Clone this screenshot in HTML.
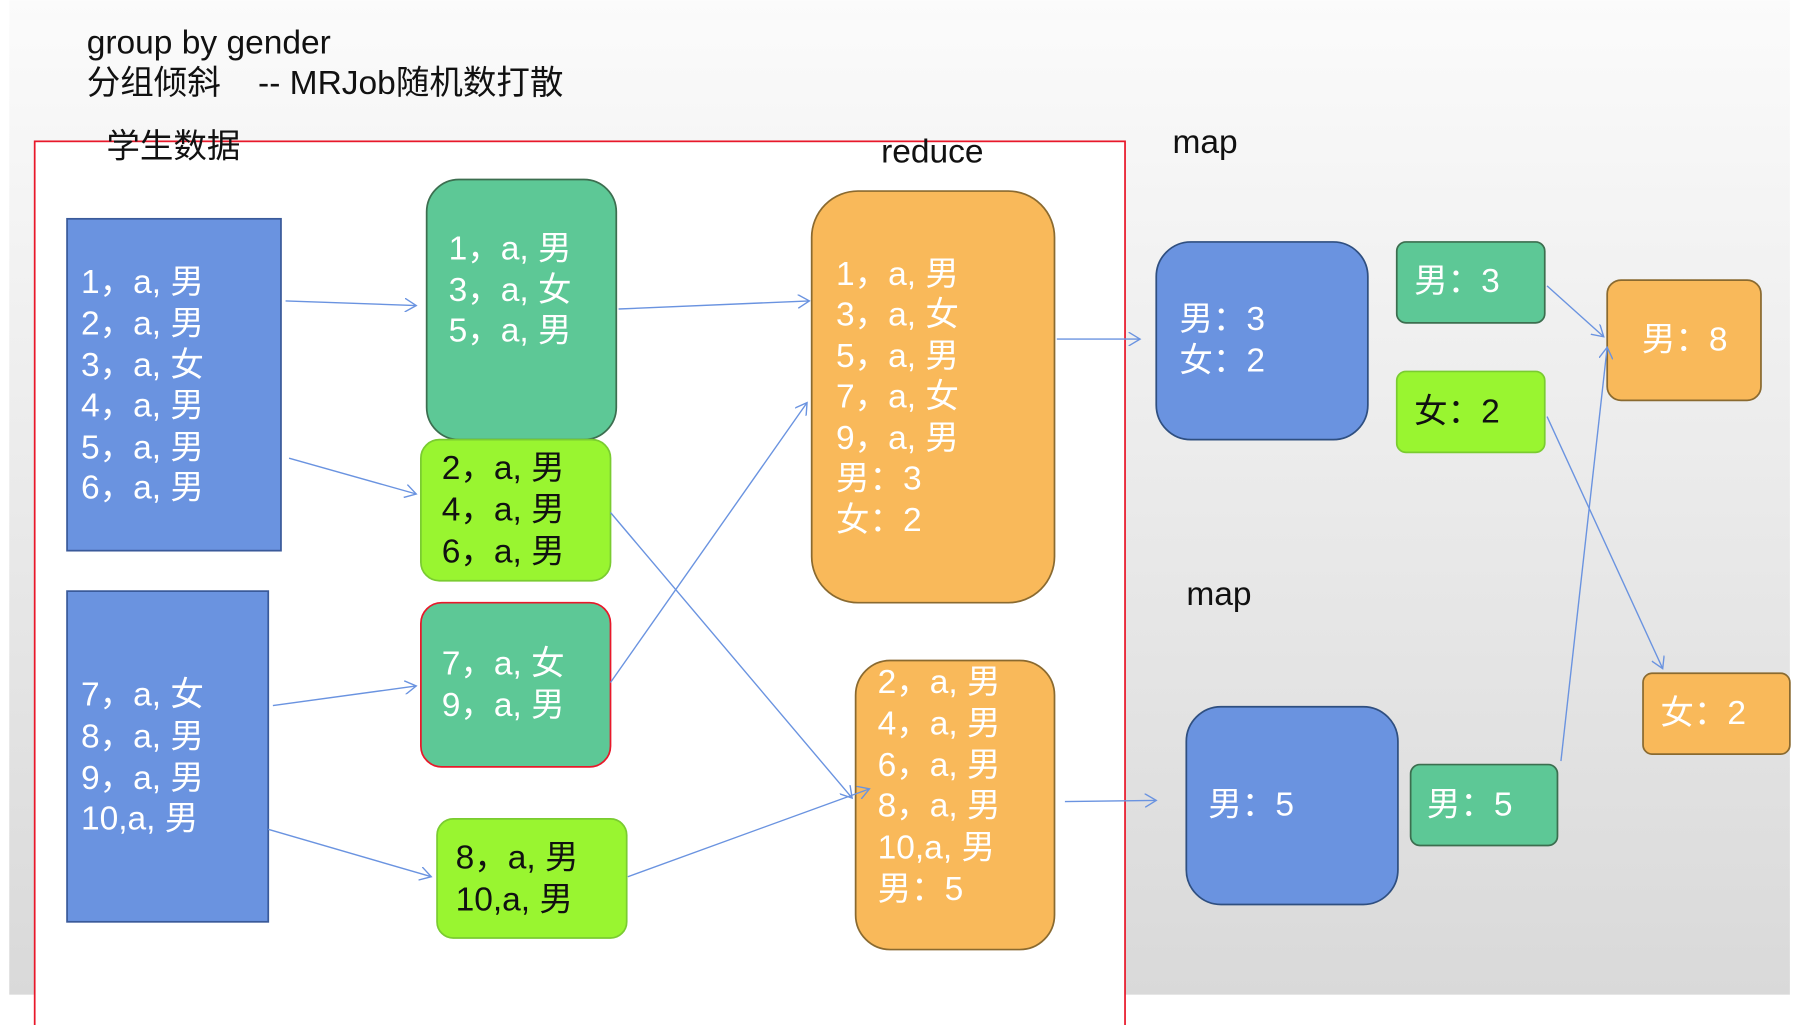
<!DOCTYPE html>
<html><head><meta charset="utf-8"><style>
html,body{margin:0;padding:0;background:#fff;overflow:hidden}
svg{display:block}
text{font-family:"Liberation Sans","Noto Sans CJK SC",sans-serif;font-size:29px;dominant-baseline:central}
.w{fill:#fff}.k{fill:#111}
</style></head><body>
<svg width="1813" height="1025" viewBox="0 0 1568 886" xmlns="http://www.w3.org/2000/svg">
<defs>
<linearGradient id="bg" x1="0" y1="0" x2="0" y2="1"><stop offset="0" stop-color="#fbfbfb"/><stop offset="1" stop-color="#d9d9d9"/></linearGradient>
<marker id="ar" markerWidth="12" markerHeight="12" refX="10" refY="6" orient="auto" markerUnits="userSpaceOnUse"><path d="M0,0 L10,6 L0,12" fill="none" stroke="#6a93e0" stroke-width="1.2"/></marker>
</defs>
<rect x="0" y="0" width="1568" height="886" fill="#fff"/>
<rect x="8" y="0" width="1540" height="860" fill="url(#bg)"/>
<rect x="30" y="122" width="943" height="780" fill="#fff" stroke="#e8182a" stroke-width="1.5"/>

<text x="75" y="37" class="k">group by gender</text>
<text x="75" y="72" class="k" xml:space="preserve">分组倾斜    -- MRJob随机数打散</text>
<text x="92" y="127" class="k">学生数据</text>
<text x="762" y="131" class="k">reduce</text>
<text x="1014" y="123" class="k">map</text>
<text x="1026" y="514" class="k">map</text>

<rect x="58" y="189" width="185" height="287" fill="#6a93e0" stroke="#3a5a9a" stroke-width="1.5"/>
<rect x="58" y="511" width="174" height="286" fill="#6a93e0" stroke="#3a5a9a" stroke-width="1.5"/>
<rect x="369" y="155" width="164" height="225" rx="28" fill="#5dc896" stroke="#3c6e4f" stroke-width="1.5"/>
<rect x="364" y="380" width="164" height="122" rx="16" fill="#99f530" stroke="#7acc30" stroke-width="1.5"/>
<rect x="364" y="521" width="164" height="142" rx="18" fill="#5dc896" stroke="#e8182a" stroke-width="1.5"/>
<rect x="378" y="708" width="164" height="103" rx="14" fill="#99f530" stroke="#7acc30" stroke-width="1.5"/>
<rect x="702" y="165" width="210" height="356" rx="40" fill="#f9b95a" stroke="#8a6a30" stroke-width="1.5"/>
<rect x="740" y="571" width="172" height="250" rx="30" fill="#f9b95a" stroke="#8a6a30" stroke-width="1.5"/>
<rect x="1000" y="209" width="183" height="171" rx="30" fill="#6a93e0" stroke="#2f4f80" stroke-width="1.5"/>
<rect x="1026" y="611" width="183" height="171" rx="30" fill="#6a93e0" stroke="#2f4f80" stroke-width="1.5"/>
<rect x="1208" y="209" width="128" height="70" rx="8" fill="#5dc896" stroke="#3c6e4f" stroke-width="1.5"/>
<rect x="1208" y="321" width="128" height="70" rx="8" fill="#99f530" stroke="#7acc30" stroke-width="1.5"/>
<rect x="1220" y="661" width="127" height="70" rx="8" fill="#5dc896" stroke="#3c6e4f" stroke-width="1.5"/>
<rect x="1390" y="242" width="133" height="104" rx="12" fill="#f9b95a" stroke="#8a6a30" stroke-width="1.5"/>
<rect x="1421" y="582" width="127" height="70" rx="8" fill="#f9b95a" stroke="#8a6a30" stroke-width="1.5"/>

<g class="w">
<text x="70" y="244" class="w">1，a, 男</text><text x="70" y="280" class="w">2，a, 男</text><text x="70" y="316" class="w">3，a, 女</text><text x="70" y="351" class="w">4，a, 男</text><text x="70" y="387" class="w">5，a, 男</text><text x="70" y="422" class="w">6，a, 男</text>
<text x="70" y="601" class="w">7，a, 女</text><text x="70" y="637" class="w">8，a, 男</text><text x="70" y="673" class="w">9，a, 男</text><text x="70" y="708" class="w">10,a, 男</text>
<text x="388" y="215" class="w">1，a, 男</text><text x="388" y="251" class="w">3，a, 女</text><text x="388" y="286" class="w">5，a, 男</text>
<text x="382" y="574" class="w">7，a, 女</text><text x="382" y="610" class="w">9，a, 男</text>
<text x="723" y="237" class="w">1，a, 男</text><text x="723" y="272" class="w">3，a, 女</text><text x="723" y="308" class="w">5，a, 男</text><text x="723" y="343" class="w">7，a, 女</text><text x="723" y="379" class="w">9，a, 男</text><text x="723" y="414" class="w">男：3</text><text x="723" y="450" class="w">女：2</text>
<text x="759" y="590" class="w">2，a, 男</text><text x="759" y="626" class="w">4，a, 男</text><text x="759" y="662" class="w">6，a, 男</text><text x="759" y="697" class="w">8，a, 男</text><text x="759" y="733" class="w">10,a, 男</text><text x="759" y="769" class="w">男：5</text>
<text x="1020" y="276" class="w">男：3</text><text x="1020" y="312" class="w">女：2</text>
<text x="1045" y="696" class="w">男：5</text>
<text x="1223" y="243" class="w">男：3</text>
<text x="1234" y="696" class="w">男：5</text>
<text x="1420" y="294" class="w">男：8</text>
<text x="1436" y="617" class="w">女：2</text>
</g>
<text x="382" y="405" class="k">2，a, 男</text><text x="382" y="441" class="k">4，a, 男</text><text x="382" y="477" class="k">6，a, 男</text>
<text x="394" y="742" class="k">8，a, 男</text><text x="394" y="778" class="k">10,a, 男</text>
<text x="1223" y="356" class="k">女：2</text>

<g stroke="#6a93e0" stroke-width="1.2" fill="none" marker-end="url(#ar)">
<line x1="247" y1="260" x2="360" y2="264"/>
<line x1="250" y1="396" x2="360" y2="427"/>
<line x1="535" y1="267" x2="700" y2="260"/>
<line x1="528" y1="590" x2="698" y2="348"/>
<line x1="528" y1="443" x2="737" y2="690"/>
<line x1="236" y1="610" x2="360" y2="593"/>
<line x1="232" y1="717" x2="373" y2="758"/>
<line x1="543" y1="758" x2="752" y2="682"/>
<line x1="914" y1="293" x2="986" y2="293"/>
<line x1="921" y1="693" x2="1000" y2="692"/>
<line x1="1338" y1="247" x2="1387" y2="291"/>
<line x1="1338" y1="360" x2="1438" y2="578"/>
<line x1="1350" y1="658" x2="1390" y2="300"/>
</g>
</svg>
</body></html>
